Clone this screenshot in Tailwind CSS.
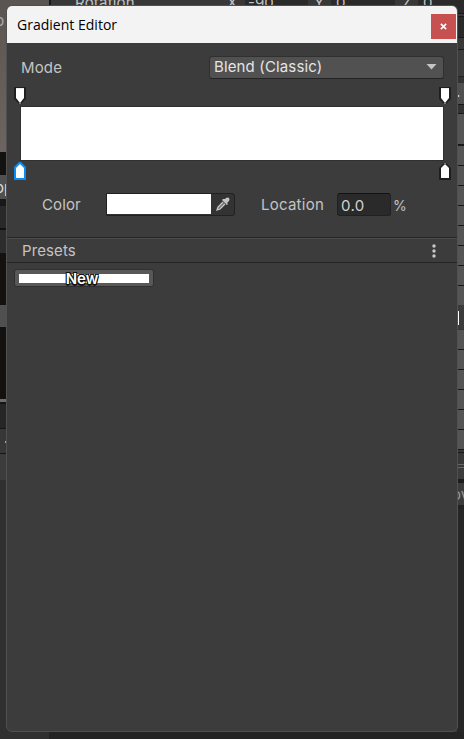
<!DOCTYPE html>
<html lang="en"><head><meta charset="utf-8"><title>Gradient Editor</title>
<script src="https://cdn.jsdelivr.net/npm/@tailwindcss/browser@4"></script></head>
<body class="w-[464px] h-[739px] overflow-hidden bg-[#262626] font-['Inter',sans-serif] text-[15px] text-[#c4c4c4]">
<div class="relative w-[464px] h-[739px] overflow-hidden">
<!-- editor behind the dialog -->
<div class="flex h-full leading-none">
  <div class="w-[49px] flex flex-col shrink-0 bg-[#303030]">
    <div class="h-[152px] bg-gradient-to-b from-[#5b5552] to-[#6c6460] pt-[13px] text-[#aaa]"><span class="-ml-[5px]">p</span></div>
    <div class="h-[23px] bg-[#131210]"></div>
    <div class="h-[24px] bg-[#505050] pt-[5px] text-[#ddd]"><span class="-ml-[5px]">op</span></div>
    <div class="h-[7px] bg-[#181818]"></div>
    <div class="h-[22px] bg-[#292929]"></div>
    <div class="h-[25px] bg-[#2d2d2d] border-t-2 border-[#111]"></div>
    <div class="h-[52px] bg-[#131210]"></div>
    <div class="h-[22px] bg-[#505050]"></div>
    <div class="h-[72px] bg-[#131210]"></div>
    <div class="h-[3px] bg-[#736b65]"></div>
    <div class="h-[26px] bg-[#262626] border-t-2 border-[#151515] pt-[11px] pl-[6px]"><div class="w-2 h-[6px] bg-[#bbb]"></div></div>
    <div class="h-[25px] bg-[#373737] border-t border-[#151515] pt-[12px] pl-[5px]"><div class="w-2 h-[2px] bg-[#aaa]"></div></div>
    <div class="h-[27px] bg-[#3c3c3c] border-t border-[#151515]"></div>
  </div>
  <div class="flex-1 bg-[#383838]">
    <div class="h-[7px] overflow-hidden flex bg-[#383838] border-l-2 border-[#191919]">
      <span class="w-[151px] pl-[24px] -mt-[5px] tracking-[0.2px]">Rotation</span>
      <span class="w-[43px] pl-[25px] -mt-[5px]">X</span>
      <span class="w-[63px] bg-[#2a2a2a] pl-[3px] -mt-[5px] h-4">-90</span>
      <span class="w-[23px] pl-[6px] -mt-[5px]">Y</span>
      <span class="w-[64px] bg-[#2a2a2a] pl-[5px] -mt-[5px] h-4">0</span>
      <span class="w-[23px] pl-[7px] -mt-[5px]">Z</span>
      <span class="flex-1 bg-[#2a2a2a] pl-[5px] -mt-[5px] h-4">0</span>
    </div>
    <div class="ml-[408px] flex flex-col">
      <div class="h-[6px] bg-[#2a2a2a]"></div><div class="h-[3px] bg-[#383838] border-t border-[#191919]"></div>
      <div class="h-[21px] bg-[#292929] border-t border-[#191919]"></div>
      <div class="h-[12px] bg-[#383838] border-t border-[#191919]"></div>
      <div class="h-[27px] bg-[#3d3d3d] border-t border-[#191919]"></div>
      <div class="h-[7px] bg-[#333] border-t border-[#222]"></div>
      <div class="h-[21px] bg-[#505050] pt-px text-[#ddd]"><span class="-ml-px">.</span></div>
      <div class="h-[9px] bg-[#333] border-t border-[#191919]"></div>
      <div class="h-[31px] bg-[#555] border-t border-[#191919]"></div>
      <div class="h-[21px] bg-[#555] border-t-2 border-[#191919]"></div>
      <div class="h-[20px] bg-[#555] border-t border-[#191919]"></div>
      <div class="h-[20px] bg-[#555] border-t border-[#191919]"></div>
      <div class="h-[20px] bg-[#555] border-t border-[#191919]"></div>
      <div class="h-[20px] bg-[#555] border-t border-[#191919]"></div>
      <div class="h-[20px] bg-[#555] border-t border-[#191919]"></div>
      <div class="h-[20px] bg-[#555] border-t border-[#191919]"></div>
      <div class="h-[20px] bg-[#555] border-t border-[#191919]"></div>
      <div class="h-[24px] bg-[#3b3b3b] pt-[6px]"><div class="w-[2px] h-[14px] bg-white"></div></div>
      <div class="h-[20px] bg-[#555] border-t border-[#333]"></div>
      <div class="h-[20px] bg-[#555] border-t border-[#191919]"></div>
      <div class="h-[20px] bg-[#555] border-t border-[#191919]"></div>
      <div class="h-[20px] bg-[#555] border-t border-[#191919]"></div>
      <div class="h-[20px] bg-[#555] border-t border-[#191919]"></div>
      <div class="h-[20px] bg-[#555] border-t border-[#191919]"></div>
      <div class="h-[3px] border-t border-[#191919]"></div>
      <div class="h-[12px] border-t border-[#191919]"></div>
      <div class="h-[4px] border-y border-[#666]"></div>
      <div class="h-[11px] bg-[#3c3c3c]"></div>
      <div class="h-[4px] bg-[#1c1c1c]"></div>
      <div class="h-[22px] bg-[#3c3c3c] pt-[4px] text-[#999]"><span class="-ml-[5px]">ov</span></div>
      <div class="h-[300px] bg-[#262626] border-t-4 border-[#222]"></div>
    </div>
  </div>
</div>
<div class="absolute left-[49px] right-0 top-[732px] h-[7px] bg-[#242424]"></div>

<!-- dialog -->
<main class="absolute left-[6px] top-[5px] w-[452px] h-[727px] rounded-[6px] border border-[#505050] bg-[#3c3c3c] overflow-hidden flex flex-col">
  <header class="h-[37px] bg-[#f3f3f3] shrink-0 flex justify-between pl-[10px] pr-px">
    <h1 class="font-['Open_Sans','Noto_Sans',sans-serif] text-[15px] leading-[37px] text-black"><span class="inline-block origin-left scale-x-[0.935]">Gradient Editor</span></h1>
    <button aria-label="Close" class="mt-2 w-[25px] h-[25px] bg-[#c75050] flex items-center justify-center"><svg class="-mt-px -ml-px" width="7" height="7" viewBox="0 0 8 8" stroke="#fff" stroke-width="1.8"><path d="M1 1l6 6M7 1L1 7"/></svg></button>
  </header>
  <section class="h-[194px] shrink-0">
    <div class="flex justify-between items-start pt-[13px] pl-[14px] pr-[13px]">
      <label class="text-[15px] leading-[24px] tracking-[0.15px]">Mode</label>
      <div class="w-[235px] h-[23px] rounded-[3px] border border-[#303030] border-b-[#242424] bg-[#515151] text-[#e4e4e4] flex justify-between items-center pl-1 pr-[6px]"><span class="tracking-[0.14px] leading-[20px] pb-px">Blend (Classic)</span><svg class="-mt-px" width="11" height="6"><path d="M.5 0h10L5.5 5.5z" fill="#c4c4c4"/></svg></div>
    </div>
    <div class="flex justify-between pl-[7px] pr-[6px] mt-[7px]">
      <svg width="12" height="18" viewBox="0 0 12 18"><path d="M0 0h12v12L7 17H5L0 12z" fill="#1f1f1f"/><path d="M2 1h8v10l-4 5-4-5z" fill="#fff"/><path d="M2 1h8v1H2z" fill="#eee"/><path d="M5 15h2v2H5z" fill="#777"/></svg>
      <svg width="12" height="18" viewBox="0 0 12 18"><path d="M0 0h12v12L7 17H5L0 12z" fill="#1f1f1f"/><path d="M2 1h8v10l-4 5-4-5z" fill="#fff"/><path d="M2 1h8v1H2z" fill="#eee"/><path d="M5 15h2v2H5z" fill="#777"/></svg>
    </div>
    <div class="mt-px ml-[13px] w-[424px] h-[55px] bg-white border border-[#303030]"></div>
    <div class="flex justify-between pl-[7px] pr-[6px] mt-px">
      <svg width="12" height="18" viewBox="0 0 12 18"><path d="M5 0h2l5 5v13H0V5z" fill="#0a8cf5"/><path d="M6 2l4 4v10H2V6z" fill="#fff"/></svg>
      <svg width="12" height="18" viewBox="0 0 12 18"><path d="M5 1h2l5 5v12H0V6z" fill="#1f1f1f"/><path d="M6 2l4 4v10H2V6z" fill="#fff"/><path d="M5 1h2v2H5z" fill="#777"/></svg>
    </div>
    <div class="flex items-center mt-[13px] h-[23px] pl-[35px]">
      <label class="w-[64px] pt-[2px] tracking-[0.1px]">Color</label>
      <div class="w-[129px] h-[23px] border border-[#212121] rounded-r-[3px] bg-[#333] flex"><div class="w-[104px] h-[20px] bg-white"></div><svg class="ml-[5px] mt-[3px]" width="14" height="15" viewBox="0 0 14 15"><path d="M7 5L2 10 1 13 4 12 9 7" fill="#777" stroke="#c4c4c4" stroke-width="1.3"/><path d="M9 2l1-1q2-1 3 0t0 3l-2 2 1 1-1 1-5-5 1-1z" fill="#c4c4c4"/></svg></div>
      <label class="ml-[26px] w-[76px] pt-[2px] tracking-[0.25px]">Location</label>
      <div class="w-[54px] h-[23px] rounded-[3px] border border-[#212121] border-t-[#111] bg-[#2a2a2a] text-[#d2d2d2] pl-[3px] leading-[24px] tracking-[0.4px]">0.0</div>
      <span class="ml-[2px] pt-px text-[14px]">%</span>
    </div>
  </section>
  <section class="shrink-0">
    <div class="h-[26px] border-t border-[#242424] border-b flex">
      <div class="flex-1 border-t border-[#4c4c4c] flex justify-between items-center pl-[15px] pr-[21px]"><h2 class="pt-[2px] tracking-[0.1px]">Presets</h2><svg width="4" height="14" fill="#c8c8c8"><circle cx="2" cy="2" r="1.7"/><circle cx="2" cy="7" r="1.7"/><circle cx="2" cy="12" r="1.7"/></svg></div>
    </div>
    <button class="block ml-[7px] mt-[6px] w-[140px] h-[18px] rounded-[3px] border border-[#303030] bg-[#585858] py-[3px] pl-1 pr-[4px] relative"><div class="h-[9px] bg-white"></div><span class="absolute left-0 right-[4px] top-0 text-center leading-[18px] font-semibold text-white [text-shadow:1px_1px_0_#111,-1px_-1px_0_#111,1px_-1px_0_#111,-1px_1px_0_#111,0_2px_1px_#111]">New</span></button>
  </section>
</main>
</div></body></html>
